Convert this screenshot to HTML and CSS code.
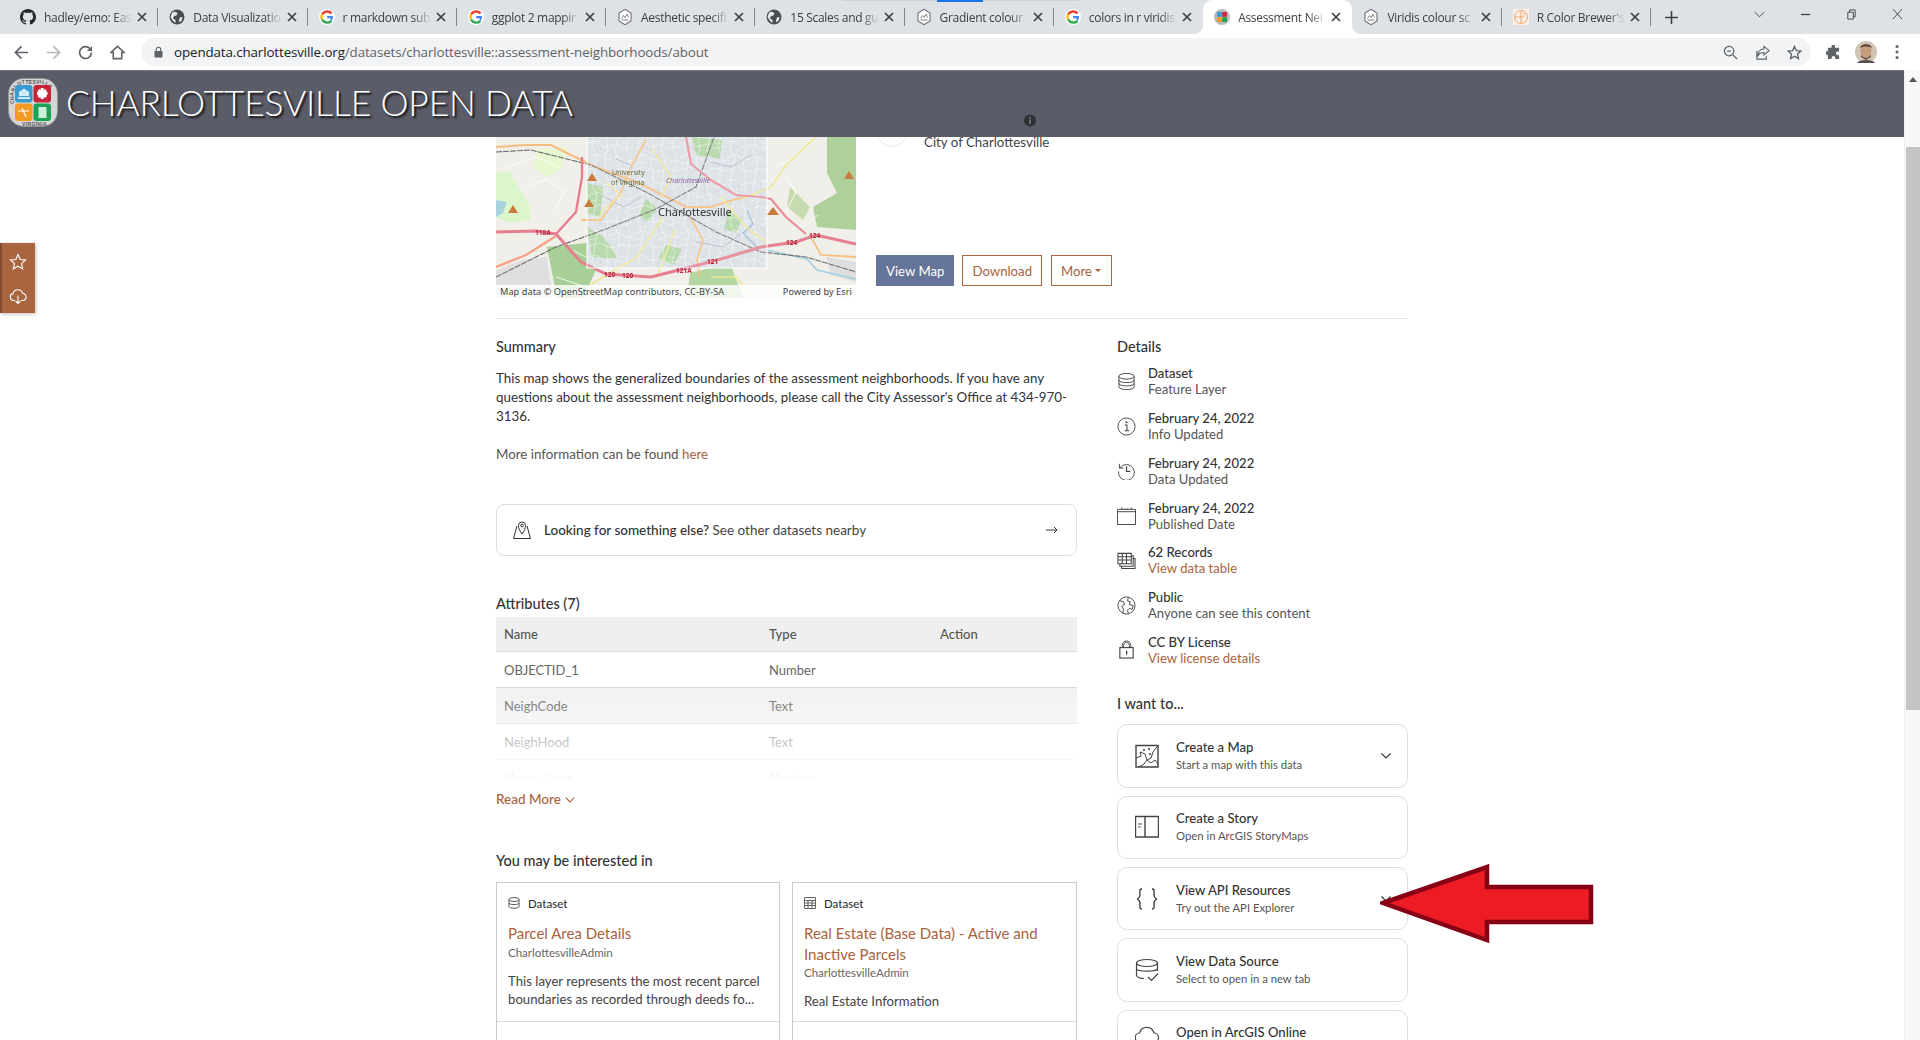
FILE: index.html
```html
<!DOCTYPE html>
<html lang="en">
<head>
<meta charset="utf-8">
<title>Assessment Neighborhoods</title>
<link rel="stylesheet" href="styles.css">
</head>
<body>
<svg class="defs" width="0" height="0" aria-hidden="true">
  <symbol id="x" viewBox="0 0 10 10"><path d="M1 1 9 9M9 1 1 9" fill="none" stroke="#3c4043" stroke-width="1.7"/></symbol>
  <symbol id="g" viewBox="0 0 16 16">
    <circle cx="8" cy="8" r="8" fill="#fff"/>
    <path d="M12.6 4.4A6 6 0 0 0 3.1 5.4" fill="none" stroke="#ea4335" stroke-width="2.4"/>
    <path d="M3.1 5.2A6 6 0 0 0 3.1 10.8" fill="none" stroke="#fbbc05" stroke-width="2.4"/>
    <path d="M3.1 10.6A6 6 0 0 0 12.4 12" fill="none" stroke="#34a853" stroke-width="2.4"/>
    <path d="M12.2 12.2A6 6 0 0 0 14 7H8.2v2.3h3.2" fill="#4285f4"/>
  </symbol>
  <symbol id="globe" viewBox="0 0 16 16">
    <circle cx="8" cy="8" r="7.5" fill="#4a4d52"/>
    <path d="M5 2.5 8.5 4 7.5 6.5 5 7 4 9.500 6.500 11 6.500 14 4 12 1.500 8 3 4ZM11 8.500 13.500 8 13 11 10.500 13.500 10 11Z" fill="#e8eaed"/>
  </symbol>
  <symbol id="hex" viewBox="0 0 16 16">
    <path d="M8 .3 14 4V12L8 15.700 2 12V4Z" fill="#fff" stroke="#6b6f75" stroke-width="1.100"/>
    <path d="M4.500 9.500 6.500 6.500 8 8.500 10 5 11.500 8.500" fill="none" stroke="#777" stroke-width=".9"/>
    <path d="M4.500 11H11.500" stroke="#999" stroke-width="1.300"/>
  </symbol>
  <pattern id="streets" width="46" height="38" patternUnits="userSpaceOnUse">
    <path d="M0 6 9 4 16 10 27 7 35 12 46 9M0 21 10 17 19 23 30 19 38 25 46 23M0 33 12 30 22 35 33 31 46 34M6 0 4 10 9 20 6 38M18 0 20 12 16 24 20 38M30 0 27 14 32 26 29 38M41 0 38 10 43 22 39 38M10 13 17 16M24 27 32 23M34 5 41 7M2 27 8 25" fill="none" stroke="#fff" stroke-width=".6" stroke-opacity=".75"/>
    <path d="M12 8 14 17M24 12 26 21M35 17 41 15M8 32 15 27M26 33 34 28" fill="none" stroke="#b8bec2" stroke-width=".3"/>
  </pattern>
</svg>

<div class="tabstrip">
  <div class="loadbar"><span></span></div>
  <div class="tab"><svg class="fav" viewBox="0 0 16 16"><path fill="#24292f" d="M8 0C3.600 0 0 3.600 0 8c0 3.500 2.300 6.500 5.500 7.600.4.100.5-.2.500-.4v-1.400c-2.200.5-2.700-1-2.700-1-.4-.9-.9-1.200-.9-1.200-.7-.5.100-.5.100-.5.800.1 1.200.8 1.200.8.700 1.200 1.900.9 2.300.7.100-.5.300-.9.500-1.100-1.800-.2-3.600-.9-3.600-4 0-.9.300-1.600.8-2.100-.1-.2-.4-1 .1-2.100 0 0 .7-.2 2.200.8.600-.2 1.300-.3 2-.3s1.400.1 2 .3c1.500-1 2.200-.8 2.200-.8.400 1.100.200 1.900.100 2.100.5.600.8 1.300.8 2.100 0 3.100-1.900 3.700-3.700 3.900.3.300.6.800.6 1.500v2.200c0 .2.100.5.600.4C13.700 14.500 16 11.500 16 8c0-4.400-3.600-8-8-8z"/></svg><span class="tabname">hadley/emo: Eas</span><svg class="close"><use href="#x"/></svg></div>
  <div class="tab"><svg class="fav"><use href="#globe"/></svg><span class="tabname">Data Visualizatio</span><svg class="close"><use href="#x"/></svg></div>
  <div class="tab"><svg class="fav"><use href="#g"/></svg><span class="tabname">r markdown sub</span><svg class="close"><use href="#x"/></svg></div>
  <div class="tab"><svg class="fav"><use href="#g"/></svg><span class="tabname">ggplot 2 mappir</span><svg class="close"><use href="#x"/></svg></div>
  <div class="tab"><svg class="fav"><use href="#hex"/></svg><span class="tabname">Aesthetic specifi</span><svg class="close"><use href="#x"/></svg></div>
  <div class="tab"><svg class="fav"><use href="#globe"/></svg><span class="tabname">15 Scales and gu</span><svg class="close"><use href="#x"/></svg></div>
  <div class="tab"><svg class="fav"><use href="#hex"/></svg><span class="tabname">Gradient colour</span><svg class="close"><use href="#x"/></svg></div>
  <div class="tab before-active"><svg class="fav"><use href="#g"/></svg><span class="tabname">colors in r viridis</span><svg class="close"><use href="#x"/></svg></div>
  <div class="tab active"><svg class="fav" viewBox="0 0 16 16"><circle cx="8" cy="8" r="8" fill="#bbb"/><rect x="3" y="3" width="4.800" height="4.800" fill="#3a9bd1"/><rect x="8.200" y="3" width="4.800" height="4.800" fill="#d0273c"/><rect x="3" y="8.200" width="4.800" height="4.800" fill="#f59b23"/><rect x="8.200" y="8.200" width="4.800" height="4.800" fill="#1aa356"/></svg><span class="tabname">Assessment Nei</span><svg class="close"><use href="#x"/></svg></div>
  <div class="tab"><svg class="fav"><use href="#hex"/></svg><span class="tabname">Viridis colour sc</span><svg class="close"><use href="#x"/></svg></div>
  <div class="tab"><svg class="fav" viewBox="0 0 16 16"><rect width="16" height="16" fill="#fbeee4"/><circle cx="8" cy="8" r="6.500" fill="none" stroke="#eaa878"/><path d="M1 8H10L12 4M8 2V14" fill="none" stroke="#eaa878"/></svg><span class="tabname">R Color Brewer's</span><svg class="close"><use href="#x"/></svg></div>
  <svg class="newtab" viewBox="0 0 14 14"><path d="M7 0V14M0 7H14" stroke="#3c4043" stroke-width="1.700"/></svg>
  <div class="winctl">
    <svg viewBox="0 0 12 12"><path d="M1 3.500 6 8.500 11 3.500" fill="none" stroke="#3c4043"/></svg>
    <svg viewBox="0 0 12 12"><path d="M1 6H11" stroke="#3c4043" stroke-width="1.400"/></svg>
    <svg viewBox="0 0 12 12"><path d="M2 3.500H8V11H2ZM4 3.500V1H10V8.500H8" fill="none" stroke="#3c4043"/></svg>
    <svg viewBox="0 0 12 12"><path d="M1 0 11 11M11 0 1 11" fill="none" stroke="#3c4043"/></svg>
  </div>
</div>

<div class="toolbar">
  <svg class="tb" viewBox="0 0 16 16"><path d="M15 8H2M8 1.500 1.500 8 8 14.500" fill="none" stroke="#5f6368" stroke-width="1.800"/></svg>
  <svg class="tb" viewBox="0 0 16 16"><path d="M1 8H14M8 1.500 14.500 8 8 14.500" fill="none" stroke="#b4b7bb" stroke-width="1.800"/></svg>
  <svg class="tb" viewBox="0 0 16 16"><path d="M13.500 5A6.300 6.300 0 1 0 14.300 8" fill="none" stroke="#5f6368" stroke-width="1.800"/><path d="M15 1V6.500H9.500Z" fill="#5f6368"/></svg>
  <svg class="tb" viewBox="0 0 16 16"><path d="M8 1.500 1 8H3.500V14.500H12.500V8H15Z" fill="none" stroke="#5f6368" stroke-width="1.700"/></svg>
  <div class="omni">
    <svg class="lock" viewBox="0 0 10 12"><path d="M2.500 5V3.200a2.500 2.500 0 0 1 5 0V5" fill="none" stroke="#5f6368" stroke-width="1.300"/><rect x=".5" y="5" width="9" height="7" rx="1" fill="#5f6368"/></svg>
    <span class="url"><b>opendata.charlottesville.org</b>/datasets/charlottesville::assessment-neighborhoods/about</span>
    <span class="omni-end">
      <svg class="om" viewBox="0 0 16 16"><circle cx="6.500" cy="6.500" r="5" fill="none" stroke="#5f6368" stroke-width="1.400"/><path d="M10.300 10.300 15 15M4.500 6.500H8.500" stroke="#5f6368" stroke-width="1.400"/></svg>
      <svg class="om" viewBox="0 0 16 16"><path d="M9.500 1.500 15 6 9.500 10.500V8C6 8 4 9.500 3 12 3 7.500 5.500 4.500 9.500 4ZM2 6V15H12V11.500" fill="none" stroke="#5f6368" stroke-width="1.200"/></svg>
      <svg class="om" viewBox="0 0 16 16"><path d="M8 1.500 10 6 14.800 6.500 11.200 9.700 12.200 14.500 8 12 3.800 14.500 4.800 9.700 1.200 6.500 6 6Z" fill="none" stroke="#5f6368" stroke-width="1.400"/></svg>
    </span>
  </div>
  <svg class="ext" viewBox="0 0 16 16"><path d="M6 1a1.800 1.800 0 0 1 3.600 0V3H14V7h-1.500a1.900 1.900 0 0 0 0 3.800H14V15H9.800v-1.500a1.900 1.900 0 0 0-3.800 0V15H2V10.500H.8a1.900 1.900 0 0 1 0-3.800H2V3H6Z" fill="#5f6368"/></svg>
  <svg class="avatar" viewBox="0 0 22 22"><circle cx="11" cy="11" r="11" fill="#cfc4b6"/><ellipse cx="11" cy="9.500" rx="5.500" ry="7" fill="#c79c7e"/><path d="M5 7C6 2 16 2 17 7 14 5 8 5 5 7Z" fill="#5a4534"/><path d="M6 13C8 18 14 18 16 13L16 16 11 19 6 16Z" fill="#6a4f3a"/><path d="M2 22C4 18 18 18 20 22Z" fill="#55504e"/></svg>
  <svg class="menu" viewBox="0 0 4 16"><circle cx="2" cy="2.500" r="1.500" fill="#5f6368"/><circle cx="2" cy="8" r="1.500" fill="#5f6368"/><circle cx="2" cy="13.500" r="1.500" fill="#5f6368"/></svg>
</div>

<div class="window">
  <div class="site">
    <header class="sitehead">
      <svg class="seal" viewBox="0 0 50 50">
        <defs><path id="ringtop" d="M5.500 34V18A12.500 12.500 0 0 1 18 5.500H32A12.500 12.500 0 0 1 44.500 18V34"/></defs>
        <rect x=".5" y=".5" width="49" height="48" rx="15" fill="#d6d6d6" stroke="#8f8f8f" stroke-width=".6"/>
        <text class="sealtext"><textPath href="#ringtop" startOffset="8">CHARLOTTESVILLE</textPath></text>
        <text class="sealtext" x="14" y="47.500">VIRGINIA</text>
        <rect x="7" y="7" width="17.500" height="17.500" rx="3" fill="#3a9bd1"/>
        <rect x="25.500" y="7" width="17.500" height="17.500" rx="3" fill="#c9233b"/>
        <rect x="7" y="25.500" width="17.500" height="17.500" rx="3" fill="#f59b23"/>
        <rect x="25.500" y="25.500" width="17.500" height="17.500" rx="3" fill="#1aa356"/>
        <path d="M10 21H22V19H10ZM11 18H21V14L16 10.500 11 14Z" fill="#cfe8f5"/>
        <path d="M34.200 10V21M29 15.500H39.500M30.500 12 38 19M38 12 30.500 19" stroke="#fff" stroke-width="3"/>
        <path d="M10 33H21M14 30 18 39" stroke="#fff" stroke-width="1.200" fill="none"/>
        <rect x="30.500" y="29" width="8" height="11" fill="#cdeeda"/>
      </svg>
      <h1 class="sitename">CHARLOTTESVILLE OPEN DATA</h1>
      <svg class="headinfo" viewBox="0 0 12 12"><circle cx="6" cy="6" r="6" fill="#2e2f33"/><rect x="5.200" y="5" width="1.600" height="4.500" fill="#77797f"/><circle cx="6" cy="3.200" r="1" fill="#77797f"/></svg>
    </header>

    <aside class="sidetools">
      <svg viewBox="0 0 18 18"><path d="M9 1.500 11.200 6.500 16.500 7 12.500 10.600 13.700 16 9 13.200 4.300 16 5.500 10.600 1.500 7 6.800 6.500Z" fill="none" stroke="#fff" stroke-width="1.100"/></svg>
      <svg viewBox="0 0 18 18"><path d="M6 13.500H4.500A3.500 3.500 0 0 1 4 6.600 5 5 0 0 1 13.700 6.500 3.500 3.500 0 0 1 13.500 13.500H12M9 8.500V16.500M6.500 14 9 16.500 11.500 14" fill="none" stroke="#fff" stroke-width="1.100"/></svg>
    </aside>

    <main class="content">
      <section class="hero">
        <div class="map">
          <svg class="mapart" viewBox="0 0 360 161" preserveAspectRatio="none">
            <rect width="360" height="161" fill="#f1efe9"/>
            <path d="M41 13 71 10 64 33 51 40 37 30Z" fill="#e8f7d0"/>
            <path d="M0 36 14 35 34 70 34 83 14 86 0 80Z" fill="#dcf6cc"/>
            <path d="M0 63 11 65 7 76 0 80Z" fill="#a9d3df"/>
            <path d="M331 0H360V93L321 90 317 70 341 56 331 36Z" fill="#aed19b"/>
            <path d="M294 50 314 70 307 83 291 70Z" fill="#c6dcb0"/>
            <path d="M240 0H271V28L245 40Z" fill="#a8ddb5"/>
            <path d="M27 123 51 120 57 161H0V133Z" fill="#dfdfdf"/>
            <path d="M51 110 91 106 91 130 100 133 87 161H61Z" fill="#a8d096"/>
            <path d="M194 136 234 126 247 161H191Z" fill="#b3d6a3"/>
            <path d="M330 120 360 125V145L335 138Z" fill="#dedede"/>
            <rect x="91" y="0" width="180" height="131" fill="#d9dfe3"/>
            <g fill="#aed4a0">
              <path d="M91 46 107 50 104 80 91 76Z"/>
              <path d="M91 90 108 100 122 122 96 120Z"/>
              <path d="M196 0 226 3 224 22 200 18Z"/>
              <path d="M150 62 162 72 150 85 143 78Z"/>
              <path d="M232 74 246 82 240 96 228 92Z"/>
              <path d="M170 108 186 112 178 128 162 122Z"/>
            </g>
            <rect x="91" y="0" width="180" height="131" fill="url(#streets)"/>
            <g fill="none" stroke="#fff" stroke-width=".8">
              <path d="M30 50 50 42 68 55 60 72M10 30 40 20 62 30M290 40 300 55 290 75M296 92 310 88 322 78M40 110 30 120M280 30 300 20M70 110 90 120M60 140 90 150"/>
            </g>
            <g fill="none" stroke="#b9a0c4" stroke-width=".8"><path d="M105 58 128 70 145 60M200 105 228 110 245 96M215 25 235 30 255 18M120 22 135 28"/></g>
            <g fill="none">
              <path d="M251 73 257 87 247 96 261 110" stroke="#8fb4d8" stroke-width="1.200"/>
              <path d="M271 113 311 122 321 133 360 142" stroke="#9fd0e2" stroke-width="1.600"/>
              <path d="M150 3 135 30 125 55 105 83 85 83" stroke="#f5c183" stroke-width="1.800"/>
              <path d="M0 10 30 8 55 8 75 18 100 30 140 45 175 62 190 70 215 70 240 62 250 60" stroke="#f5bd80" stroke-width="2"/>
              <path d="M194 80 207 103 201 123 204 140" stroke="#f5c183" stroke-width="1.800"/>
              <path d="M315 100 325 118 360 120" stroke="#f5c183" stroke-width="1.800"/>
              <path d="M155 10 175 40 165 60M110 45 125 58 108 72 100 85" stroke="#eee890" stroke-width="1.400"/>
              <path d="M167 80 141 120 94 148M179 93 161 140M320 0 290 28 275 50 246 62M225 60 250 90 270 105M215 140 240 140 256 160" stroke="#eee890" stroke-width="1.500"/>
              <path d="M0 140 60 110 110 92 160 72 200 50 218 0M0 15 35 13 95 28 150 55 220 95 265 115 310 120 360 135" stroke="#6d6d6d" stroke-width="1.100" stroke-dasharray="6 1"/>
              <path d="M0 95 40 94 60 97 85 125 110 137 155 140 195 130 225 122 265 110 300 105 320 98 360 107" stroke="#e57f90" stroke-width="3"/>
              <path d="M86 20 86 40 80 75 60 97" stroke="#e57f90" stroke-width="2.400"/>
              <path d="M190 0 195 27 215 43 240 58 265 60 275 62 290 80 310 97" stroke="#e88e9a" stroke-width="2.200"/>
              <path d="M0 130 30 118 60 99" stroke="#f4a285" stroke-width="2.400"/>
            </g>
            <rect x="91" y="-2" width="180" height="133" fill="#fff" fill-opacity=".14" stroke="#fff" stroke-width="1"/>
            <g fill="#c97a3c"><path d="M96 36 101 44H91ZM93 62 98 70H88ZM17 68 22 76H12ZM353 34 358 42H348ZM277 70 283 78H271Z"/></g>
            <g class="shield"><text x="39" y="98">118A</text><text x="108" y="140">120</text><text x="126" y="141">120</text><text x="180" y="136">121A</text><text x="211" y="127">121</text><text x="290" y="108">124</text><text x="313" y="101">124</text></g>
            <text class="mapplace" x="116" y="38">University</text>
            <text class="mapplace" x="115" y="48">of Virginia</text>
            <text class="maptown" x="170" y="46">Charlottesville</text>
            <text class="mapcity" x="162" y="79">Charlottesville</text>
          </svg>
          <div class="mapattr"><span>Map data © OpenStreetMap contributors, CC-BY-SA</span><span>Powered by Esri</span></div>
        </div>
        <div class="heroinfo">
          <div class="owner"><span class="ownerpic"></span><span class="ownername">City of Charlottesville</span></div>
          <div class="actions">
            <a class="btn primary">View Map</a>
            <a class="btn">Download</a>
            <a class="btn btn-more">More <i class="caret"></i></a>
          </div>
        </div>
      </section>

      <div class="columns">
        <div class="leftcol">
          <h2 class="sec sec-summary">Summary</h2>
          <p class="para">This map shows the generalized boundaries of the assessment neighborhoods. If you have any questions about the assessment neighborhoods, please call the City Assessor's Office at 434-970-3136.</p>
          <p class="para more">More information can be found <a class="lnk">here</a></p>

          <div class="nearby">
            <svg class="nearby-ic" viewBox="0 0 20 20"><path d="M5 6 1.500 18.500H18.500L15 6M10 14C7.500 10.500 6.500 8.500 6.500 5.500A3.500 3.500 0 0 1 13.500 5.500C13.500 8.500 12.500 10.500 10 14Z" fill="#fff" stroke="#333" stroke-width="1"/><circle cx="10" cy="5.500" r="1.300" fill="none" stroke="#333"/></svg>
            <span class="nearby-text"><b>Looking for something else?</b> See other datasets nearby</span>
            <svg class="nearby-arrow" viewBox="0 0 12 8"><path d="M0 4H11M8 1 11 4 8 7" fill="none" stroke="#333"/></svg>
          </div>

          <h2 class="sec sec-attr">Attributes (7)</h2>
          <div class="attrs">
            <div class="row head"><span>Name</span><span>Type</span><span>Action</span></div>
            <div class="row"><span>OBJECTID_1</span><span>Number</span><span></span></div>
            <div class="row alt"><span>NeighCode</span><span>Text</span><span></span></div>
            <div class="row"><span>NeighHood</span><span>Text</span><span></span></div>
            <div class="row"><span>Shape_Leng</span><span>Number</span><span></span></div>
          </div>
          <a class="readmore">Read More <svg viewBox="0 0 10 6"><path d="M.7.7 5 5 9.300.7" fill="none" stroke="#a9623d" stroke-width="1.100"/></svg></a>

          <h2 class="sec sec-may">You may be interested in</h2>
          <div class="cards">
            <article class="card">
              <div class="cardbody">
                <div class="cardtype"><svg viewBox="0 0 12 12"><ellipse cx="6" cy="2.500" rx="5" ry="2" fill="none" stroke="#555"/><path d="M1 2.500V9.500C1 11.800 11 11.800 11 9.500V2.500M1 6C1 8 11 8 11 6" fill="none" stroke="#555"/></svg><span>Dataset</span></div>
                <h3 class="cardtitle">Parcel Area Details</h3>
                <div class="cardowner">CharlottesvilleAdmin</div>
                <p class="carddesc">This layer represents the most recent parcel boundaries as recorded through deeds fo...</p>
              </div>
              <div class="cardfoot"></div>
            </article>
            <article class="card">
              <div class="cardbody">
                <div class="cardtype"><svg viewBox="0 0 12 12"><path d="M.5.500H11.500V11.500H.5ZM.5 3.500H11.500M.5 6H11.500M.5 8.500H11.500M4 3.500V11.500M8 3.500V11.500" fill="none" stroke="#555" stroke-width=".9"/></svg><span>Dataset</span></div>
                <h3 class="cardtitle">Real Estate (Base Data) - Active and Inactive Parcels</h3>
                <div class="cardowner">CharlottesvilleAdmin</div>
                <p class="carddesc">Real Estate Information</p>
              </div>
              <div class="cardfoot"></div>
            </article>
          </div>
        </div>

        <div class="rightcol">
          <h2 class="sec sec-summary">Details</h2>
          <ul class="details">
            <li><svg viewBox="0 0 20 20"><ellipse cx="10" cy="4.500" rx="8" ry="3" fill="none" stroke="#444"/><path d="M2 4.500V15.500C2 19.500 18 19.500 18 15.500V4.500M2 8.500C2 12 18 12 18 8.500M2 12C2 15.500 18 15.500 18 12" fill="none" stroke="#444"/></svg><div><strong>Dataset</strong><span>Feature Layer</span></div></li>
            <li><svg viewBox="0 0 20 20"><circle cx="10" cy="10" r="9" fill="none" stroke="#444"/><circle cx="10" cy="5.500" r="1.100" fill="#444"/><path d="M8 8.500H10.500V14.500M8 14.500H13" fill="none" stroke="#444" stroke-width="1.100"/></svg><div><strong>February 24, 2022</strong><span>Info Updated</span></div></li>
            <li><svg viewBox="0 0 20 20"><path d="M2.500 3V7.500H7M3 7.500A8.300 8.300 0 1 1 1.700 11" fill="none" stroke="#444"/><path d="M10 5.500V11H14" fill="none" stroke="#444" stroke-width="1.300"/></svg><div><strong>February 24, 2022</strong><span>Data Updated</span></div></li>
            <li><svg viewBox="0 0 20 20"><path d="M.5 3.500H19.500V19.500H.5ZM.5 6H19.500M5 1.500V4M15 1.500V4M8 3.500H12" fill="none" stroke="#444"/></svg><div><strong>February 24, 2022</strong><span>Published Date</span></div></li>
            <li><svg viewBox="0 0 20 20"><path d="M1 2.500H15V13.500H1ZM1 6H15M1 9.500H15M5.500 2.500V13.500M10 2.500V13.500M15 5H17V16H3V13.500M17 8H19V18.500H5V16" fill="none" stroke="#444" stroke-width="1.100"/></svg><div><strong>62 Records</strong><span><a class="lnk">View data table</a></span></div></li>
            <li><svg viewBox="0 0 20 20"><circle cx="10" cy="10" r="9" fill="none" stroke="#444"/><path d="M3 5 7 6 8 9 5 11 7 14 6 18M12 1.500 11 5 14 6 13 9 17 10 16 14 13 13 11 15 12 18.500" fill="none" stroke="#444"/></svg><div><strong>Public</strong><span>Anyone can see this content</span></div></li>
            <li><svg viewBox="0 0 20 20"><path d="M5.500 8V5.500a4.500 4.500 0 0 1 9 0V8M7 8V5.500a3 3 0 0 1 6 0V8" fill="none" stroke="#444"/><rect x="3" y="8" width="14" height="11" fill="none" stroke="#444" stroke-width="1.200"/><path d="M10 11V16M10 13H11.500" stroke="#444"/></svg><div><strong>CC BY License</strong><span><a class="lnk">View license details</a></span></div></li>
          </ul>

          <h2 class="sec sec-want">I want to...</h2>
          <div class="wants">
            <div class="want"><svg class="wantic" viewBox="0 0 24 24"><path d="M1 1.500H23V23H1Z" fill="none" stroke="#444" stroke-width="1.400"/><path d="M1 14 6 12 5 8 10 10 12 16 9 20 4 23M23 1.500 18 8 16 14 12 16M12 16 16 19 20 16 23 20" fill="none" stroke="#444"/><circle cx="9" cy="6" r="1.100" fill="#444"/><circle cx="14" cy="5" r="1.100" fill="#444"/><circle cx="15" cy="10" r="1.100" fill="#444"/></svg><div class="wanttext"><strong>Create a Map</strong><span>Start a map with this data</span></div><svg class="wantchev" viewBox="0 0 10 6"><path d="M.5.500 5 5 9.500.5" fill="none" stroke="#333" stroke-width="1.100"/></svg></div>
            <div class="want"><svg class="wantic" viewBox="0 0 24 24"><path d="M.5 1.500H23.500V22H.5ZM10 1.500V22" fill="none" stroke="#444" stroke-width="1.400"/><path d="M3 9H7M3 12H5.500" stroke="#444" stroke-width="1.100"/></svg><div class="wanttext"><strong>Create a Story</strong><span>Open in ArcGIS StoryMaps</span></div></div>
            <div class="want"><svg class="wantic" viewBox="0 0 24 24"><path d="M7 2C4 2 5 4.500 5 8 5 11 2.500 11.500 2.500 12 2.500 12.500 5 13 5 16 5 19.500 4 22 7 22M17 2C20 2 19 4.500 19 8 19 11 21.500 11.500 21.500 12 21.500 12.500 19 13 19 16 19 19.500 20 22 17 22" fill="none" stroke="#333" stroke-width="1.300"/></svg><div class="wanttext"><strong>View API Resources</strong><span>Try out the API Explorer</span></div><svg class="wantchev" viewBox="0 0 10 6"><path d="M.5.500 5 5 9.500.5" fill="none" stroke="#333" stroke-width="1.100"/></svg></div>
            <div class="want"><svg class="wantic" viewBox="0 0 24 24"><ellipse cx="12" cy="5" rx="10.500" ry="3.500" fill="none" stroke="#444" stroke-width="1.200"/><path d="M1.500 5V17C1.500 19.500 6 20.500 9 20.500M22.500 5V13M1.500 10.500C1.500 14 22.500 14 22.500 10.500M13 19 16.500 22.500 23 15.500" fill="none" stroke="#444" stroke-width="1.200"/></svg><div class="wanttext"><strong>View Data Source</strong><span>Select to open in a new tab</span></div></div>
            <div class="want last"><svg class="wantic" viewBox="0 0 24 24"><path d="M6 19H5A4.500 4.500 0 0 1 4.500 10 7.500 7.500 0 0 1 19 10 4.500 4.500 0 0 1 19 19H18" fill="none" stroke="#444" stroke-width="1.200"/></svg><div class="wanttext"><strong>Open in ArcGIS Online</strong></div></div>
          </div>
        </div>
      </div>
    </main>
    <svg class="callout" viewBox="0 0 214 79"><path d="M3 39 107 3V23H211V58H107V76Z" fill="#ed1c24" stroke="#880015" stroke-width="4.500" stroke-linejoin="miter"/></svg>
  </div>
  <div class="scrollbar"><i class="sb-up"></i><div class="sb-thumb"></div></div>
</div>
</body>
</html>
```
FILE: styles.css
```css
* { box-sizing: border-box; }
html, body { margin: 0; height: 100%; }
body {
  height: 1040px;
  overflow: hidden;
  display: flex;
  flex-direction: column;
  background: #fff;
  color: #333;
  font-family: Lato, "Noto Sans", sans-serif;
}
.defs { position: absolute; }

/* browser chrome */
.tabstrip {
  position: relative;
  height: 34px;
  flex: none;
  display: flex;
  align-items: stretch;
  padding-left: 9px;
  background: #dee1e6;
  font-family: "Open Sans", sans-serif;
  font-size: 12px;
  letter-spacing: -.3px;
  color: #3c4043;
}
.loadbar { position: absolute; top: 0; left: 842px; width: 237px; height: 1px; background: #cfd2d6; }
.loadbar span { position: absolute; left: 95px; width: 46px; height: 2px; background: #1a73e8; }
.tab {
  position: relative;
  width: 149.270px;
  display: flex;
  align-items: center;
  padding-left: 11px;
  padding-right: 11px;
}
.tab::after {
  content: "";
  position: absolute;
  right: 0;
  top: 8px;
  bottom: 8px;
  width: 1px;
  background: #80868b;
}
.tab.active { background: #fff; border-radius: 9px 9px 0 0; }
.tab.before-active::after { display: none; }
.tab.active::before,
.tab.active::after {
  content: "";
  position: absolute;
  top: auto;
  bottom: 0;
  width: 8px;
  height: 8px;
  background: radial-gradient(circle at 0 0, transparent 7.500px, #fff 8px);
}
.tab.active::before { left: -8px; }
.tab.active::after { left: auto; right: -8px; background: radial-gradient(circle at 100% 0, transparent 7.500px, #fff 8px); }
.fav { width: 16px; height: 16px; flex: none; }
.tabname {
  flex: 1;
  min-width: 0;
  margin-left: 8px;
  white-space: nowrap;
  -webkit-mask-image: linear-gradient(to right, #000 80%, transparent 100%);
  mask-image: linear-gradient(to right, #000 80%, transparent 100%);
}
.close { width: 10px; height: 10px; flex: none; margin-left: 5px; }
.newtab { width: 13px; height: 13px; align-self: center; margin-left: 14px; }
.winctl { margin-left: auto; display: flex; align-items: center; gap: 35px; padding-right: 17px; padding-bottom: 6px; }
.winctl svg { width: 11px; height: 11px; }

.toolbar {
  height: 36px;
  flex: none;
  display: flex;
  align-items: center;
  padding: 0 0 0 14px;
  background: #fff;
}
.tb { width: 15px; height: 15px; margin-right: 17px; flex: none; }
.omni {
  width: 1670px;
  height: 28px;
  margin-left: -1px;
  display: flex;
  align-items: center;
  padding-left: 13px;
  background: #f1f3f4;
  border-radius: 14px;
  font-family: "Open Sans", sans-serif;
  font-size: 13.400px;
  color: #5f6368;
}
.lock { width: 9px; height: 12px; flex: none; }
.url { margin-left: 11px; white-space: nowrap; letter-spacing: -.13px; }
.url b { font-weight: 400; color: #202124; }
.omni-end { margin-left: auto; display: flex; gap: 17px; padding-right: 9px; }
.om { width: 15px; height: 15px; }
.ext { width: 15px; height: 15px; margin-left: 15px; flex: none; }
.avatar { width: 22px; height: 22px; margin-left: 14px; flex: none; }
.menu { width: 4px; height: 16px; margin-left: 18px; flex: none; }

/* page */
.window { flex: 1; min-height: 0; display: flex; }
.site { position: relative; flex: 1; min-width: 0; overflow: hidden; }
.scrollbar { position: relative; width: 16px; flex: none; background: #f8f8f8; border-left: 1px solid #efefef; }
.sb-up { position: absolute; left: 4px; top: 7px; border: 4px solid transparent; border-top: 0; border-bottom: 5px solid #555; }
.sb-thumb { position: absolute; left: 1px; right: 0; top: 77px; height: 563px; background: #c4c4c4; }

.sitehead {
  position: relative;
  height: 67px;
  display: flex;
  align-items: center;
  padding-left: 8px;
  background: #5a5c68;
  border-top: 1px solid #74767f;
}
.seal { width: 50px; height: 50px; flex: none; margin-top: -2px; }
.sealtext { font: 700 5px "Liberation Sans", sans-serif; letter-spacing: .35px; fill: #555; }
.sitename {
  margin: 0 0 4px 8px;
  font-size: 35.500px;
  font-weight: 300;
  color: #fff;
  white-space: nowrap;
  letter-spacing: -.2px;
  text-shadow: 2px 2px 2px #111;
}
.headinfo { position: absolute; left: 1024px; top: 43px; width: 12px; height: 13px; }

.sidetools {
  position: absolute;
  left: 0;
  top: 173px;
  width: 35px;
  height: 70px;
  display: flex;
  flex-direction: column;
  align-items: center;
  justify-content: space-around;
  padding: 2px 2px 0 0;
  background: #a96540;
  border-left: 2px solid #834c30;
  box-shadow: 1px 1px 4px rgba(0,0,0,.25);
}
.sidetools svg { width: 18px; height: 18px; }

.content { width: 912px; margin-left: 496px; }
.hero { display: flex; height: 182px; border-bottom: 1px solid #e6e6e6; }
.map { position: relative; width: 360px; height: 161px; overflow: hidden; border-radius: 0 0 6px 6px; }
.mapart { display: block; width: 360px; height: 161px; filter: blur(.35px); }
.mapattr {
  position: absolute;
  left: 0; right: 0; bottom: 0;
  height: 13px;
  display: flex;
  justify-content: space-between;
  padding: 0 4px;
  background: rgba(255,255,255,.8);
  font: 9.200px/13px "Noto Sans", sans-serif;
  letter-spacing: .05px;
  color: #444;
}
.shield { font: 700 6.500px "Noto Sans", sans-serif; fill: #b5283f; }
.mapplace { font: 7px "Noto Sans", sans-serif; fill: #6b6b40; }
.maptown { font: italic 7px "Noto Sans", sans-serif; fill: #8a5f9c; }
.mapcity { font: 11px "Noto Sans", sans-serif; fill: #333; }

.heroinfo { flex: 1; display: flex; flex-direction: column; justify-content: space-between; height: 149px; padding-left: 20px; }
.owner { display: flex; align-items: center; height: 11px; }
.ownerpic { width: 32px; height: 32px; margin-top: -24px; border: 1px solid #e8e8e8; border-radius: 50%; flex: none; }
.ownername { margin-left: 16px; font-size: 13.300px; line-height: 11px; white-space: nowrap; color: #444; }
.actions { display: flex; gap: 8px; }
.btn {
  height: 31px;
  display: flex;
  align-items: center;
  padding: 0 9px;
  border: 1px solid #a96540;
  color: #a9623d;
  font-size: 13.200px;
}
.btn.primary { background: #647599; border-color: #647599; color: #fff; }
.btn-more { margin-left: 1px; padding: 0 10px 0 9px; }
.caret { width: 0; height: 0; margin-left: 3px; border: 3px solid transparent; border-top: 3px solid #a9623d; border-bottom: 0; }

.columns { display: flex; gap: 40px; }
.leftcol { width: 581px; flex: none; }
.rightcol { width: 291px; flex: none; }
.sec { margin: 0; font-size: 14.500px; font-weight: 500; line-height: 20px; color: #333; }
.sec-summary { margin-top: 18px; }
.para { margin: 12px 0 0; font-size: 13.350px; line-height: 18.800px; color: #333; }
.para.more { margin-top: 20px; color: #555; }
.lnk { color: #a9623d; }

.nearby {
  height: 52px;
  margin-top: 40px;
  display: flex;
  align-items: center;
  padding: 0 18px 0 15px;
  border: 1px solid #dedede;
  border-radius: 8px;
  font-size: 13.500px;
}
.nearby-ic { width: 20px; height: 20px; flex: none; }
.nearby-text { margin-left: 12px; flex: 1; color: #444; }
.nearby-text b { font-weight: 500; color: #333; }
.nearby-arrow { width: 12px; height: 8px; }
.sec-attr { margin-top: 38px; }
.attrs { position: relative; height: 163px; margin-top: 3px; }
.attrs::after {
  content: "";
  position: absolute;
  left: 0; right: 0; top: 72px; height: 127px;
  background: linear-gradient(to bottom, rgba(255,255,255,0), rgba(255,255,255,.55) 46px, rgba(255,255,255,.86) 78px, #fff 94px);
}
.row {
  display: grid;
  grid-template-columns: 265px 171px 1fr;
  align-items: center;
  height: 36px;
  padding-left: 8px;
  border-bottom: 1px solid #dcdcdc;
  font-size: 13px;
  color: #666;
}
.row.head { height: 35px; background: #efefef; color: #555; font-weight: 500; }
.row.alt { background: #f1f1f1; }
.readmore { position: relative; z-index: 1; display: flex; align-items: center; gap: 4px; margin-top: 9px; height: 20px; color: #a9623d; font-size: 13.500px; font-weight: 500; }
.readmore svg { width: 10px; height: 6px; margin-top: 2px; }
.sec-may { margin-top: 42px; }
.cards { display: grid; grid-template-columns: 284px 285px; gap: 12px; margin-top: 11px; }
.card { height: 220px; border: 1px solid #c9c9c9; }
.cardbody { height: 139px; padding: 12px 11px 0; border-bottom: 1px solid #dcdcdc; }
.cardtype { display: flex; align-items: center; gap: 8px; height: 16px; font-size: 11.500px; font-weight: 500; color: #333; }
.cardtype svg { width: 12px; height: 12px; flex: none; }
.cardtitle { margin: 12px 0 0; font-size: 15px; font-weight: 400; line-height: 20.500px; color: #a9623d; }
.cardowner { font-size: 11.500px; line-height: 15px; margin-top: 1px; color: #666; }
.carddesc { margin: 12px 0 0; font-size: 13.200px; line-height: 18px; color: #444; }

.details { list-style: none; margin: 2px 0 0; padding: 0; }
.details li { display: flex; align-items: center; height: 44.750px; }
.details svg { width: 19px; height: 19px; flex: none; }
.details div { margin-left: 12px; display: flex; flex-direction: column; font-size: 13.100px; line-height: 16px; }
.details strong { font-weight: 500; color: #333; }
.details span { color: #555; }
.sec-want { margin-top: 22px; }
.wants { display: flex; flex-direction: column; gap: 8px; margin-top: 10px; }
.want {
  height: 63.400px;
  flex: none;
  display: flex;
  align-items: center;
  padding: 0 16px 0 17px;
  border: 1px solid #dedede;
  border-radius: 10px;
}
.want.last { align-items: flex-start; padding-top: 12px; }
.wantic { width: 24px; height: 24px; flex: none; }
.wanttext { margin-left: 17px; flex: 1; display: flex; flex-direction: column; }
.wanttext strong { font-size: 13.100px; font-weight: 500; line-height: 18px; color: #333; }
.wanttext span { font-size: 11.300px; line-height: 18px; color: #555; }
.wantchev { width: 10px; height: 6px; flex: none; }
.callout { position: absolute; left: 1380px; top: 794px; width: 214px; height: 79px; }
```
